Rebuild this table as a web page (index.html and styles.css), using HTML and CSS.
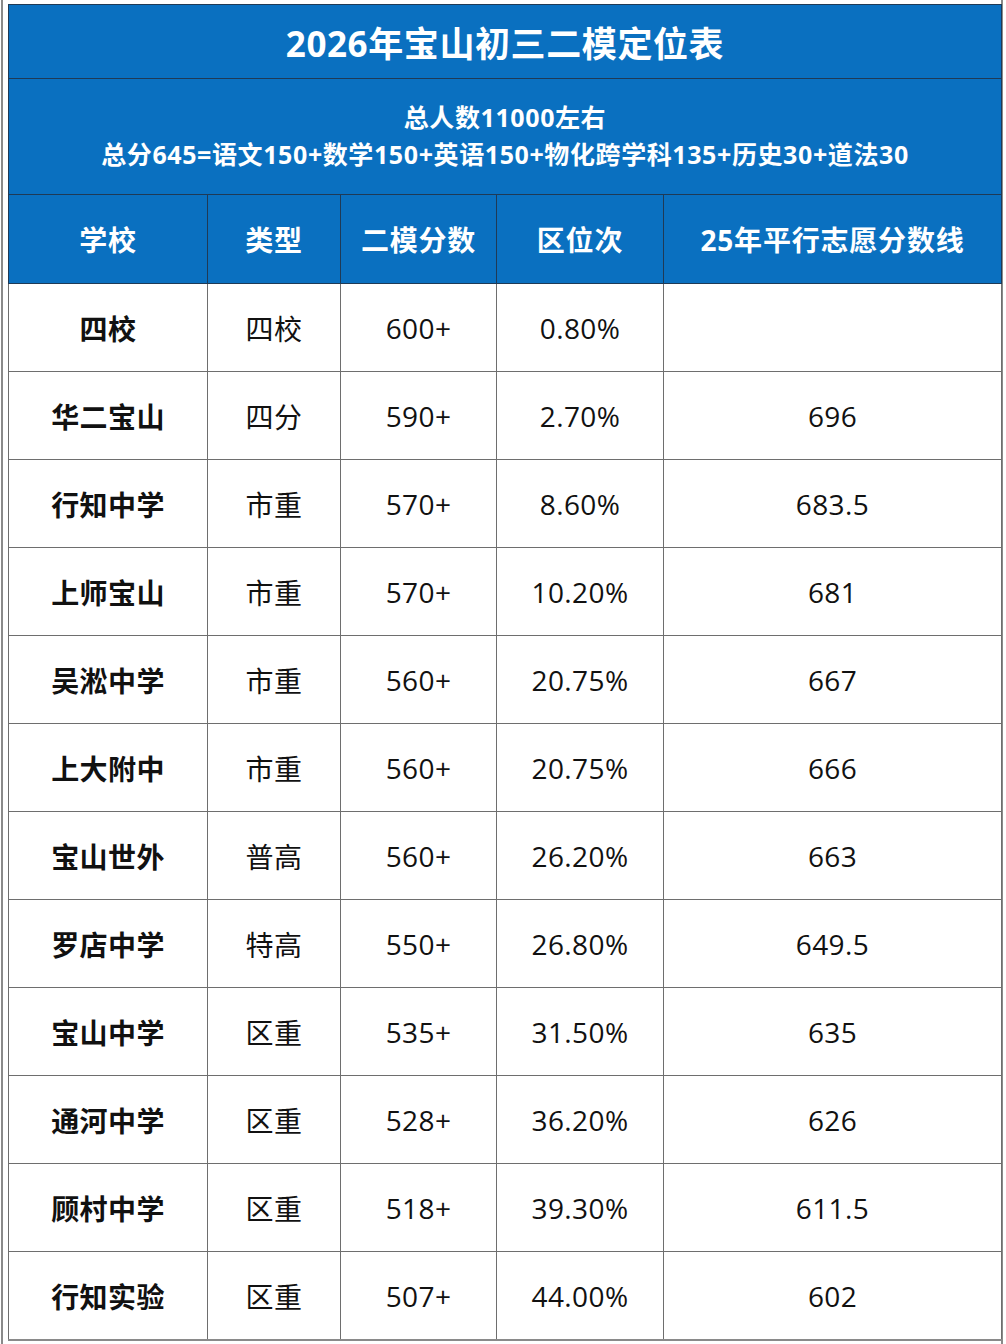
FILE: index.html
```html
<!DOCTYPE html>
<html lang="zh-CN">
<head>
<meta charset="utf-8">
<title>2026年宝山初三二模定位表</title>
<link rel="stylesheet" href="styles.css">
</head>
<body>
<div class="frame">
  <table class="rank">
    <colgroup>
      <col class="c1"><col class="c2"><col class="c3"><col class="c4"><col class="c5">
    </colgroup>
    <thead>
      <tr class="title-row"><th colspan="5">2026年宝山初三二模定位表</th></tr>
      <tr class="sub-row"><th colspan="5"><div>总人数11000左右</div><div>总分645=语文150+数学150+英语150+物化跨学科135+历史30+道法30</div></th></tr>
      <tr class="head-row"><th>学校</th><th>类型</th><th>二模分数</th><th>区位次</th><th>25年平行志愿分数线</th></tr>
    </thead>
    <tbody>
      <tr><td class="name">四校</td><td>四校</td><td>600+</td><td>0.80%</td><td></td></tr>
      <tr><td class="name">华二宝山</td><td>四分</td><td>590+</td><td>2.70%</td><td>696</td></tr>
      <tr><td class="name">行知中学</td><td>市重</td><td>570+</td><td>8.60%</td><td>683.5</td></tr>
      <tr><td class="name">上师宝山</td><td>市重</td><td>570+</td><td>10.20%</td><td>681</td></tr>
      <tr><td class="name">吴淞中学</td><td>市重</td><td>560+</td><td>20.75%</td><td>667</td></tr>
      <tr><td class="name">上大附中</td><td>市重</td><td>560+</td><td>20.75%</td><td>666</td></tr>
      <tr><td class="name">宝山世外</td><td>普高</td><td>560+</td><td>26.20%</td><td>663</td></tr>
      <tr><td class="name">罗店中学</td><td>特高</td><td>550+</td><td>26.80%</td><td>649.5</td></tr>
      <tr><td class="name">宝山中学</td><td>区重</td><td>535+</td><td>31.50%</td><td>635</td></tr>
      <tr><td class="name">通河中学</td><td>区重</td><td>528+</td><td>36.20%</td><td>626</td></tr>
      <tr><td class="name">顾村中学</td><td>区重</td><td>518+</td><td>39.30%</td><td>611.5</td></tr>
      <tr><td class="name">行知实验</td><td>区重</td><td>507+</td><td>44.00%</td><td>602</td></tr>
    </tbody>
  </table>
</div>
</body>
</html>
```
FILE: styles.css
```css
html, body {
  margin: 0;
  padding: 0;
  background: #ffffff;
}
body {
  font-family: "Open Sans", "Noto Sans CJK SC", sans-serif;
  color: #111111;
}
.frame {
  margin-left: 1px;
  width: 1002px;
  height: 1344px;
  box-sizing: border-box;
  border-left: 2px solid #8a8a8a;
  border-right: 2px solid #8a8a8a;
  padding: 4px 0 0 5px;
}
.rank {
  border-collapse: collapse;
  width: 993px;
  table-layout: fixed;
}
.c1 { width: 199px; }
.c2 { width: 133px; }
.c3 { width: 156px; }
.c4 { width: 167px; }
.c5 { width: 338px; }
.rank th {
  background: #0a70c0;
  color: #ffffff;
  font-weight: 700;
  border: 1px solid #1f3a56;
  text-align: center;
  padding: 0;
}
.title-row th {
  height: 73px;
  font-size: 35px;
  letter-spacing: 0.6px;
}
.sub-row th {
  height: 113px;
  font-size: 25px;
  line-height: 37px;
  letter-spacing: 0.6px;
  padding-bottom: 2px;
}
.head-row th {
  height: 88px;
  font-size: 28px;
  letter-spacing: 0.8px;
}
.rank td {
  height: 87px;
  border: 1px solid #6e6e6e;
  text-align: center;
  font-size: 28px;
  letter-spacing: 0.4px;
  padding: 0;
  font-weight: 400;
}
.rank td.name {
  font-weight: 700;
}
.rank tbody tr:last-child td {
  border-bottom: 2px solid #8a8a8a;
}
```
